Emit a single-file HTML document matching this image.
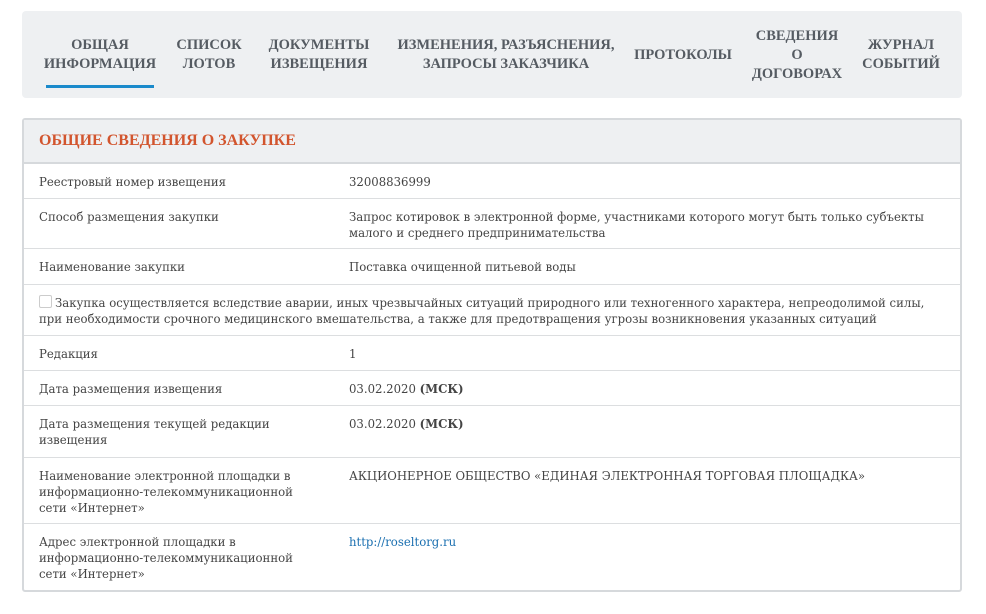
<!DOCTYPE html>
<html><head><meta charset="utf-8"><style>
body{margin:0;width:986px;height:614px;background:#fff;font-family:"DejaVu Serif",serif;color:#444;position:relative;overflow:hidden}
.nav{position:absolute;left:22px;top:11px;width:940px;height:87px;background:#eef0f2;border-radius:4px}
.ni{position:absolute;transform:translateX(-50%);text-align:center;font-family:"Liberation Serif",serif;font-weight:bold;font-size:14.5px;line-height:19px;color:#555b62;white-space:nowrap}
.ul{position:absolute;left:46px;top:85px;width:108px;height:3px;background:#1a8acb}
.card{position:absolute;left:22px;top:118px;width:936px;height:470px;border:2px solid #d6d9dc;border-radius:3px}
.hd{position:absolute;left:0;top:0;width:936px;height:42px;background:#eef0f2;border-bottom:2px solid #d6d9dc}
.hd span{position:absolute;left:15px;top:12px;font-family:"Liberation Serif",serif;font-weight:bold;font-size:16px;color:#d2552e}
.row{position:absolute;left:0;width:936px;border-bottom:1px solid #dcdee0;font-size:11.7px;line-height:16px;color:#444}
.l{position:absolute;left:15px;top:10px;width:268px}
.v{position:absolute;left:325px;top:10px;width:580px}
a{color:#1a6fb0}
.cb{display:inline-block;width:11px;height:11px;border:1px solid #ccc;border-radius:2px;vertical-align:-1px;margin-right:3px;background:#fff}
.nw{white-space:nowrap}
</style></head><body>
<div class="nav">
<div class="ni" style="left:78px;top:25px">ОБЩАЯ<br>ИНФОРМАЦИЯ</div>
<div class="ni" style="left:187px;top:25px">СПИСОК<br>ЛОТОВ</div>
<div class="ni" style="left:297px;top:25px">ДОКУМЕНТЫ<br>ИЗВЕЩЕНИЯ</div>
<div class="ni" style="left:484px;top:25px">ИЗМЕНЕНИЯ, РАЗЪЯСНЕНИЯ,<br>ЗАПРОСЫ ЗАКАЗЧИКА</div>
<div class="ni" style="left:661px;top:35px">ПРОТОКОЛЫ</div>
<div class="ni" style="left:775px;top:16px">СВЕДЕНИЯ<br>О<br>ДОГОВОРАХ</div>
<div class="ni" style="left:879px;top:25px">ЖУРНАЛ<br>СОБЫТИЙ</div>
</div>
<div class="ul"></div>
<div class="card">
<div class="hd"><span>ОБЩИЕ СВЕДЕНИЯ О ЗАКУПКЕ</span></div>
<div class="row" style="top:44px;height:34px"><div class="l">Реестровый номер извещения</div><div class="v">32008836999</div></div>
<div class="row" style="top:79px;height:49px"><div class="l">Способ размещения закупки</div><div class="v">Запрос котировок в электронной форме, участниками которого могут быть только субъекты<br>малого и среднего предпринимательства</div></div>
<div class="row" style="top:129px;height:35px"><div class="l">Наименование закупки</div><div class="v">Поставка очищенной питьевой воды</div></div>
<div class="row" style="top:165px;height:50px"><div class="l" style="width:920px"><span class="cb"></span>Закупка осуществляется вследствие аварии, иных чрезвычайных ситуаций природного или техногенного характера, непреодолимой силы,<br>при необходимости срочного медицинского вмешательства, а также для предотвращения угрозы возникновения указанных ситуаций</div></div>
<div class="row" style="top:216px;height:34px"><div class="l">Редакция</div><div class="v">1</div></div>
<div class="row" style="top:251px;height:34px"><div class="l">Дата размещения извещения</div><div class="v">03.02.2020 <b>(МСК)</b></div></div>
<div class="row" style="top:286px;height:51px"><div class="l">Дата размещения текущей редакции<br>извещения</div><div class="v">03.02.2020 <b>(МСК)</b></div></div>
<div class="row" style="top:338px;height:65px"><div class="l">Наименование электронной площадки в<br><span class="nw">информационно-телекоммуникационной</span><br>сети «Интернет»</div><div class="v">АКЦИОНЕРНОЕ ОБЩЕСТВО «ЕДИНАЯ ЭЛЕКТРОННАЯ ТОРГОВАЯ ПЛОЩАДКА»</div></div>
<div class="row" style="top:404px;height:66px;border-bottom:none"><div class="l">Адрес электронной площадки в<br><span class="nw">информационно-телекоммуникационной</span><br>сети «Интернет»</div><div class="v"><a>http://roseltorg.ru</a></div></div>
</div>
</body></html>
